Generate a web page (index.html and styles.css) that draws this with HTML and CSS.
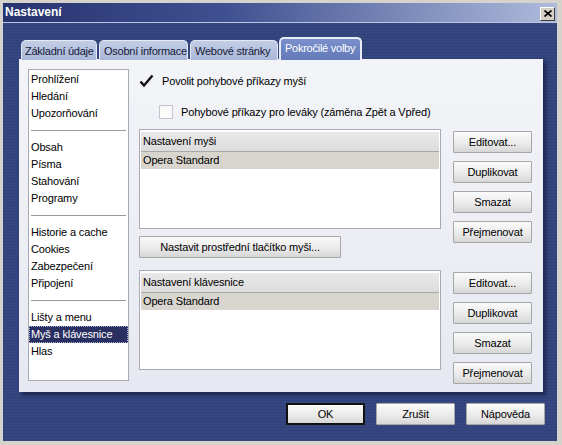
FILE: index.html
```html
<!DOCTYPE html>
<html lang="cs">
<head>
  <meta charset="UTF-8" />
  <title>Nastavení</title>
  <link rel="stylesheet" href="styles.css">
</head>
<body>

<div class="window">
  <div class="titlebar">
    <span class="title">Nastavení</span>
    <button class="close-btn" aria-label="Zavřít">
      <svg width="8" height="7" viewBox="0 0 8 7"><path d="M0.5 0.5 L7.5 6.5 M7.5 0.5 L0.5 6.5" stroke="#000" stroke-width="1.6"/></svg>
    </button>
  </div>

  <div class="body">
    <ul class="tabs">
      <li class="tab tab-basic">Základní údaje</li>
      <li class="tab tab-personal">Osobní informace</li>
      <li class="tab tab-web">Webové stránky</li>
      <li class="tab tab-advanced active">Pokročilé volby</li>
    </ul>

    <div class="panel">
      <div class="sidebar">
        <ul class="group">
          <li>Prohlížení</li>
          <li>Hledání</li>
          <li>Upozorňování</li>
        </ul>
        <hr>
        <ul class="group">
          <li>Obsah</li>
          <li>Písma</li>
          <li>Stahování</li>
          <li>Programy</li>
        </ul>
        <hr>
        <ul class="group">
          <li>Historie a cache</li>
          <li>Cookies</li>
          <li>Zabezpečení</li>
          <li>Připojení</li>
        </ul>
        <hr>
        <ul class="group">
          <li>Lišty a menu</li>
          <li class="selected">Myš a klávesnice</li>
          <li>Hlas</li>
        </ul>
      </div>

      <div class="main">
        <label class="check-row">
          <span class="check">
            <svg width="15" height="14" viewBox="0 0 15 14"><path d="M1.5 7.5 L5 11.5 L13.5 1.5" fill="none" stroke="#111" stroke-width="2.4"/></svg>
          </span>
          Povolit pohybové příkazy myší
        </label>
        <label class="check-row sub">
          <span class="box"></span>
          Pohybové příkazy pro leváky (záměna Zpět a Vpřed)
        </label>

        <div class="setup">
          <div class="listbox">
            <div class="list-head">Nastavení myši</div>
            <div class="list-row">Opera Standard</div>
          </div>
          <div class="side-buttons">
            <button class="btn">Editovat...</button>
            <button class="btn">Duplikovat</button>
            <button class="btn">Smazat</button>
            <button class="btn">Přejmenovat</button>
          </div>
        </div>

        <button class="btn wide">Nastavit prostřední tlačítko myši...</button>

        <div class="setup">
          <div class="listbox">
            <div class="list-head">Nastavení klávesnice</div>
            <div class="list-row">Opera Standard</div>
          </div>
          <div class="side-buttons">
            <button class="btn">Editovat...</button>
            <button class="btn">Duplikovat</button>
            <button class="btn">Smazat</button>
            <button class="btn">Přejmenovat</button>
          </div>
        </div>
      </div>
    </div>

    <div class="footer">
      <button class="btn default">OK</button>
      <button class="btn">Zrušit</button>
      <button class="btn">Nápověda</button>
    </div>
  </div>
</div>

</body>
</html>
```

FILE: styles.css
```css
* {
  box-sizing: border-box;
}
body {
  margin: 0;
  font-family: "Liberation Sans", Arial, sans-serif;
  font-size: 11px;
  letter-spacing: -0.15px;
  color: #000;
  background: #d4d0c8;
}
ul {
  list-style: none;
  margin: 0;
  padding: 0;
}
.window {
  width: 562px;
  height: 445px;
  border-style: solid;
  border-color: #d6d3cc;
  border-width: 3px 5px 4px 3px;
  display: flex;
  flex-direction: column;
}
.titlebar {
  height: 20px;
  display: flex;
  align-items: center;
  justify-content: space-between;
  padding: 0 2px 0 2px;
  background: linear-gradient(to right, #27336f 0%, #3f5090 40%, #aebbdc 100%);
  border-bottom: 1px solid #b9c5e2;
}
.title {
  color: #fff;
  font-weight: bold;
  font-size: 12px;
  letter-spacing: 0;
  margin-top: -1px;
}
.close-btn {
  width: 15px;
  height: 14px;
  padding: 0;
  margin-top: 2px;
  background: #d4d0c8;
  border: 1px solid;
  border-color: #fff #404040 #404040 #fff;
  display: flex;
  align-items: center;
  justify-content: center;
}
.body {
  flex: 1;
  padding: 17px 13px 0 16px;
  background-color: #35467f;
  background-image: repeating-linear-gradient(to bottom, #36477f 0px, #36477f 2px, #30407a 2px, #30407a 3px);
  display: flex;
  flex-direction: column;
}
.tabs {
  display: flex;
  height: 19px;
  padding-left: 2px;
  gap: 2px;
  position: relative;
  z-index: 1;
}
.tab {
  height: 20px;
  padding: 4px 0 0 4px;
  background: linear-gradient(#c3cde6, #aab7d8);
  border: 1px solid #e4e9f5;
  border-bottom: none;
  border-radius: 5px 5px 0 0;
  color: #141a36;
  font-size: 11px;
  letter-spacing: -0.25px;
  white-space: nowrap;
  overflow: hidden;
}
.tab-basic { width: 76px; padding-left: 3px; }
.tab-personal { width: 89px; }
.tab-web { width: 88px; }
.tab-advanced { width: 83px; }
.tab.active {
  height: 23px;
  margin-top: -3px;
  margin-left: -1px;
  padding-top: 3px;
  background: linear-gradient(#7990cc, #6379b8);
  border: 2px solid #e8ecf7;
  border-bottom: none;
  color: #fff;
}
.panel {
  width: 524px;
  height: 333px;
  padding: 10px 11px 11px 9px;
  display: flex;
  gap: 10px;
  background: linear-gradient(#f3f4f8, #e6e9f1);
  box-shadow: 3px 3px 4px rgba(10, 15, 40, 0.55);
}
.sidebar {
  width: 101px;
  height: 312px;
  background: #fff;
  border: 1px solid #a9a9b4;
  padding-top: 1px;
}
.group li {
  height: 17px;
  line-height: 17px;
  padding-left: 2px;
  white-space: nowrap;
}
.group li.selected {
  background: #2a2f62;
  color: #fff;
  outline: 1px dotted #aab0d8;
  outline-offset: -1px;
}
.sidebar hr {
  margin: 8px 2px;
  border: none;
  border-top: 1px solid #9a9a9a;
  height: 0;
}
.main {
  flex: 1;
  display: flex;
  flex-direction: column;
  padding-top: 5px;
}
.check-row {
  display: flex;
  align-items: center;
  height: 14px;
  gap: 8px;
}
.check {
  width: 15px;
  height: 14px;
  display: flex;
}
.check-row.sub {
  margin-top: 17px;
  padding-left: 20px;
  gap: 8px;
}
.box {
  width: 14px;
  height: 14px;
  background: linear-gradient(#f8f8f8, #fff);
  border: 1px solid #c4c4cc;
}
.setup {
  display: flex;
  gap: 12px;
  height: 100px;
  margin-top: 10px;
  flex-shrink: 0;
}
.setup + .btn.wide + .setup {
  margin-top: 12px;
}
.listbox {
  width: 302px;
  height: 100px;
  background: #fff;
  border: 1px solid #a9a9b4;
  padding: 2px 1px 0 1px;
}
.list-head {
  height: 20px;
  line-height: 19px;
  padding-left: 2px;
  background: linear-gradient(#e8e8e8, #dcdcdc);
  border-bottom: 1px solid #a8a8a8;
}
.list-row {
  height: 17px;
  line-height: 17px;
  padding-left: 2px;
  background: #d8d5cf;
}
.side-buttons {
  display: flex;
  flex-direction: column;
  gap: 8px;
  padding-top: 2px;
}
.btn {
  width: 79px;
  height: 22px;
  flex-shrink: 0;
  padding: 0;
  font-family: "Liberation Sans", Arial, sans-serif;
  font-size: 11px;
  letter-spacing: -0.15px;
  color: #000;
  background: linear-gradient(#fbfbfb, #e9e9e9 60%, #d6d6d6);
  border: 1px solid #a6a6a6;
  border-radius: 1px;
}
.btn.wide {
  width: 202px;
  margin-top: 7px;
  position: relative;
  z-index: 1;
}
.footer {
  display: flex;
  justify-content: flex-end;
  gap: 11px;
  margin-top: 11px;
  margin-right: -1px;
}
.footer .btn {
  width: 79px;
}
.footer .btn.default {
  border: 2px solid #111;
}
```
